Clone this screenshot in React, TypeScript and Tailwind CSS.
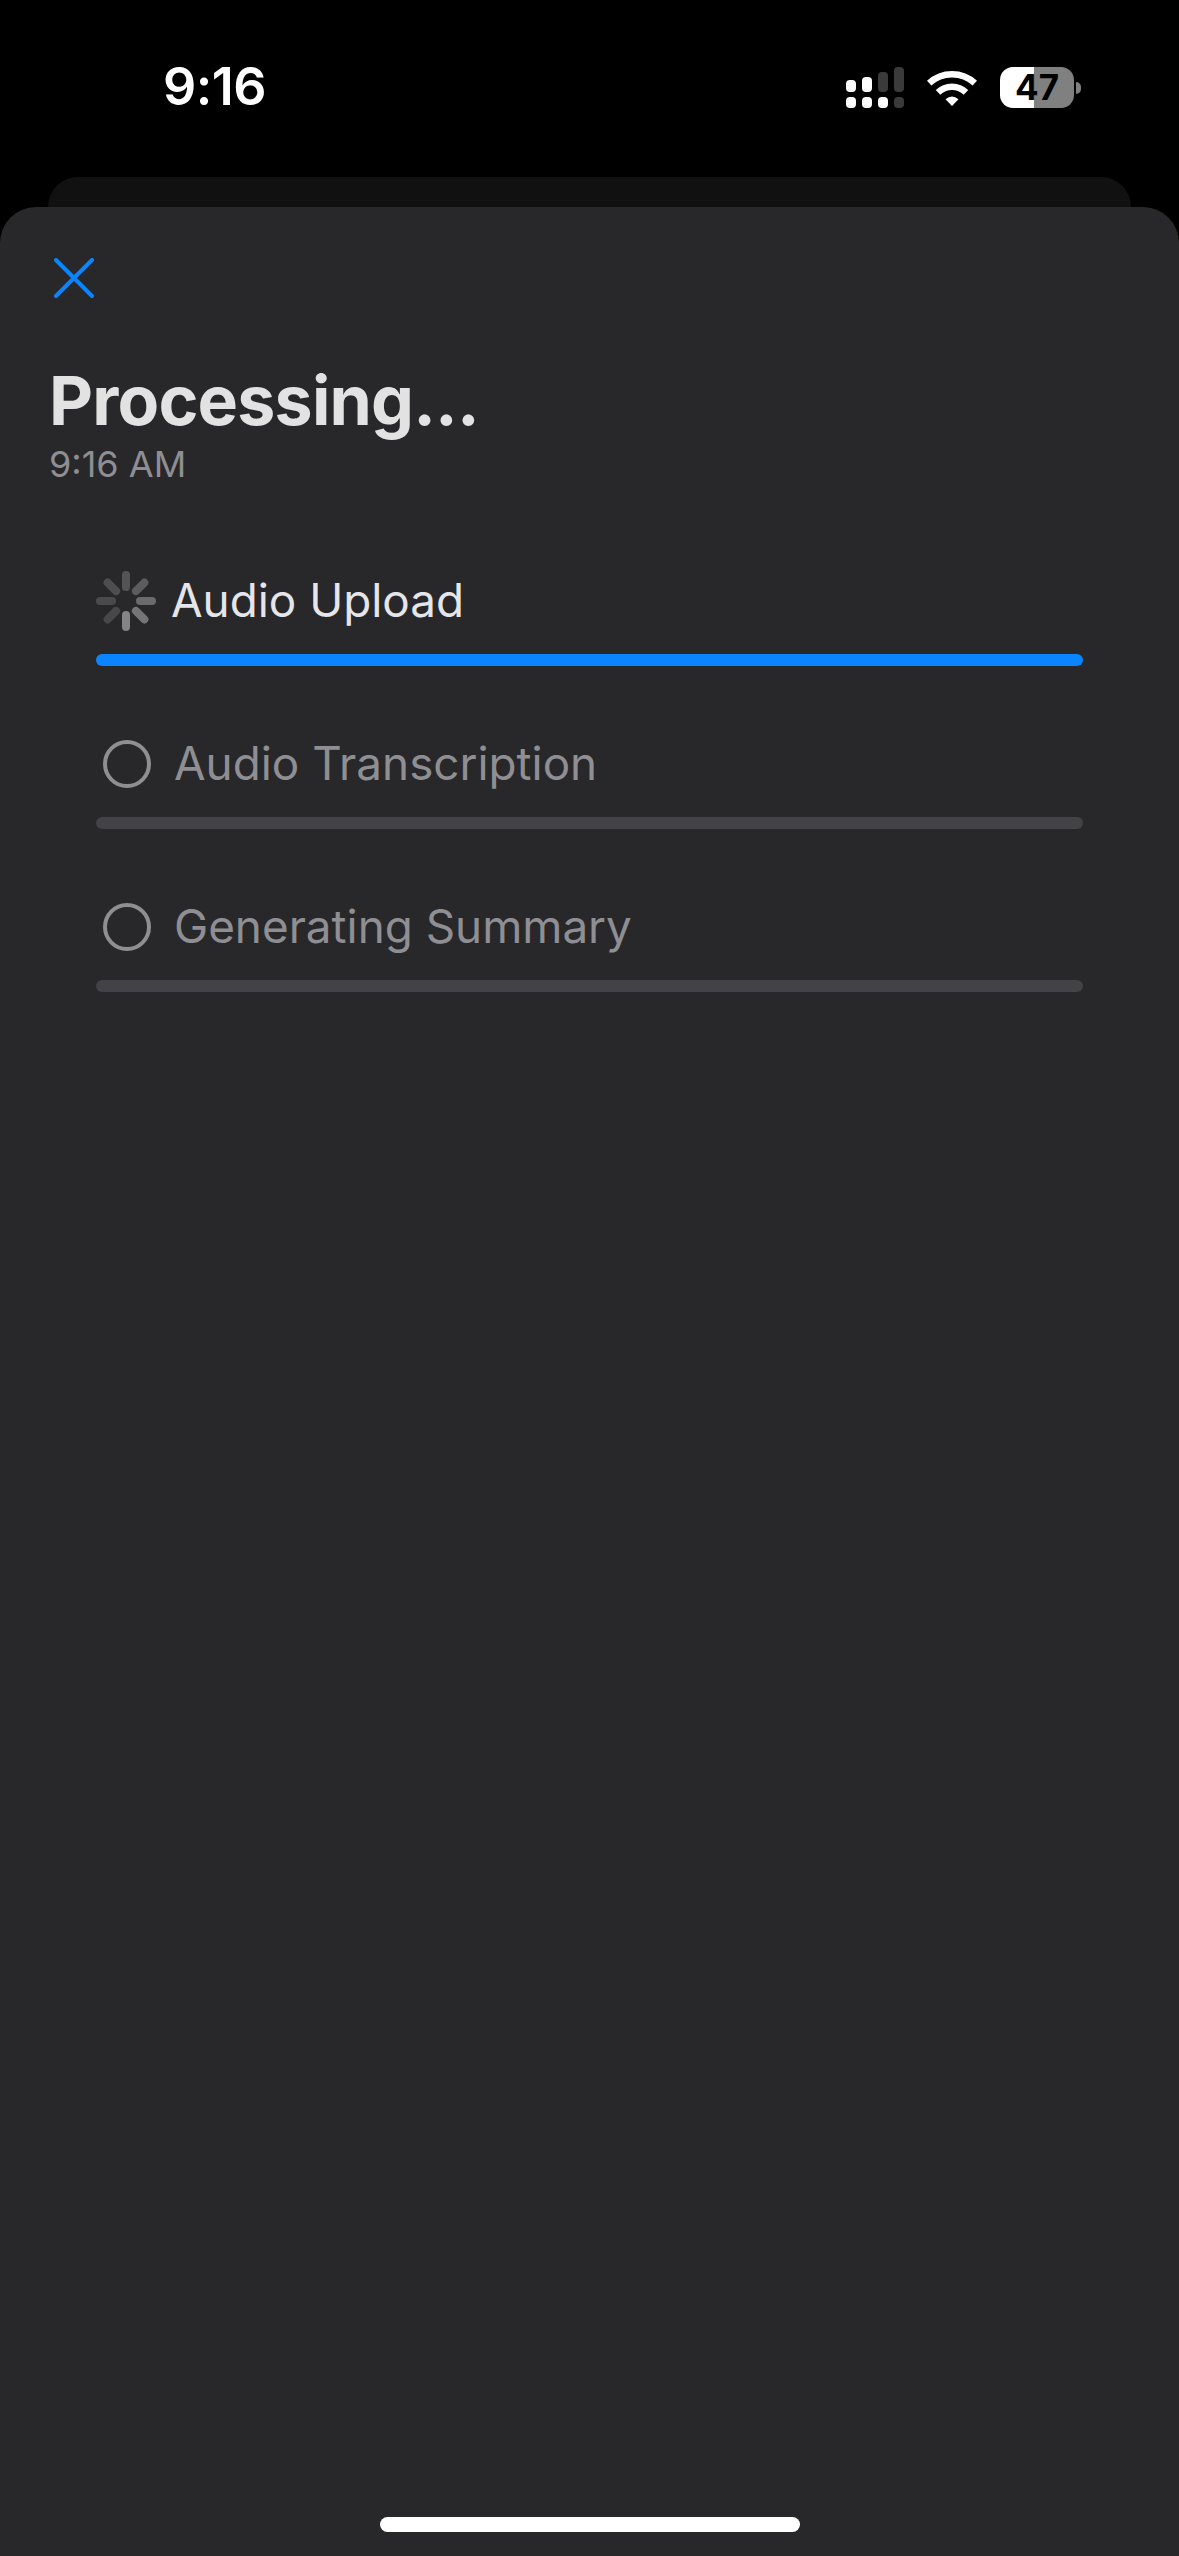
import React from 'react';

const steps = [
  { name: 'Audio Upload', active: true },
  { name: 'Audio Transcription', active: false },
  { name: 'Generating Summary', active: false },
];

// brightest spoke at the bottom, fading as it goes round
const spokes = [0.95, 0.8, 0.7, 0.55, 0.45, 0.4, 0.36, 0.34];

const Spinner = () => (
  <svg width="60" height="60" viewBox="0 0 60 60">
    {spokes.map((o, i) => (
      <line
        key={i}
        x1="30"
        y1="44"
        x2="30"
        y2="56"
        stroke="#a0a0a6"
        strokeWidth="8"
        strokeLinecap="round"
        opacity={o * 0.8}
        transform={`rotate(${-45 * i} 30 30)`}
      />
    ))}
  </svg>
);

const SignalIcon = () => (
  <svg width="58" height="41" viewBox="0 0 58 41">
    <rect x="0" y="13" width="10" height="12" rx="4" fill="#fff" />
    <rect x="16" y="10" width="10" height="15" rx="4" fill="#fff" />
    <rect x="32" y="5" width="10" height="20" rx="4" fill="#3a3a3a" />
    <rect x="48" y="0" width="10" height="25" rx="4" fill="#3a3a3a" />
    <rect x="0" y="30" width="10" height="11" rx="4" fill="#fff" />
    <rect x="16" y="30" width="10" height="11" rx="4" fill="#fff" />
    <rect x="32" y="30" width="10" height="11" rx="4" fill="#fff" />
    <rect x="48" y="30" width="10" height="11" rx="4" fill="#3a3a3a" />
  </svg>
);

const WifiIcon = () => (
  <svg width="50" height="37" viewBox="0 0 50 37" fill="none" stroke="#fff" strokeWidth="6.5">
    <path d="M2.2 14.2 A33.5 33.5 0 0 1 47.8 14.2" />
    <path d="M11 23.4 A20 20 0 0 1 39 23.4" />
    <path d="M18.5 30.2 Q25 24.6 31.5 30.2 L25 37 Z" fill="#fff" stroke="none" />
  </svg>
);

const App: React.FC = () => {
  return (
    <div className="flex h-[2556px] w-[1179px] flex-col overflow-hidden bg-black font-['Inter',sans-serif]">
      {/* Status bar */}
      <div className="flex h-[177px] items-start justify-between pl-[163px] pr-[98px] pt-[60px]">
        <span className="text-[52px] font-semibold leading-[54px] tracking-[-0.5px] text-white">9:16</span>
        <div className="flex items-center pt-[7px]">
          <SignalIcon />
          <div className="ml-[23px]">
            <WifiIcon />
          </div>
          <div className="ml-[23px] flex h-[41px] w-[74px] items-center justify-center rounded-[13px] bg-[linear-gradient(90deg,#fff_46%,#808080_46%)] text-[35px] font-bold leading-none text-black">
            47
          </div>
          <div className="ml-[2px] h-[12px] w-[5px] rounded-r-full bg-[#808080]" />
        </div>
      </div>

      {/* Card behind the sheet */}
      <div className="mx-[48px] h-[30px] shrink-0 rounded-t-[30px] bg-[#111111]" />

      {/* Sheet */}
      <div className="flex flex-1 flex-col rounded-t-[36px] bg-[#28282a]">
        <div className="pl-[54px] pt-[51px]">
          <svg width="40" height="40" viewBox="0 0 40 40" fill="none" stroke="#0a84ff" strokeWidth="4" strokeLinecap="round">
            <path d="M2 2 L38 38 M38 2 L2 38" />
          </svg>
        </div>

        <div className="pl-[49px] pt-[61px]">
          <h1 className="text-[68px] font-bold leading-[82px] tracking-[-0.8px] text-[#e2e2e2]">Processing...</h1>
          <p className="mt-[2px] text-[36px] leading-[42px] text-[#8e8e93]">9:16 AM</p>
        </div>

        <div className="flex flex-col gap-[62px] px-[96px] pt-[80px]">
          {steps.map((step) => (
            <div key={step.name}>
              <div className="flex h-[72px] items-center">
                {step.active ? (
                  <Spinner />
                ) : (
                  <div className="ml-[7px] h-[48px] w-[48px] rounded-full border-[4px] border-[#8e8e93]" />
                )}
                <span
                  className={`text-[45.8px] leading-none ${step.active ? 'ml-[15px] text-[#e5e5ea]' : 'ml-[23px] text-[#8e8e93]'}`}
                >
                  {step.name}
                </span>
              </div>
              <div className={`mt-[17px] h-[12px] rounded-full ${step.active ? 'bg-[#0a84ff]' : 'bg-[#434347]'}`} />
            </div>
          ))}
        </div>

        {/* Home indicator */}
        <div className="mt-auto flex justify-center pb-[24px]">
          <div className="h-[15px] w-[420px] rounded-full bg-white" />
        </div>
      </div>
    </div>
  );
};

export default App;
